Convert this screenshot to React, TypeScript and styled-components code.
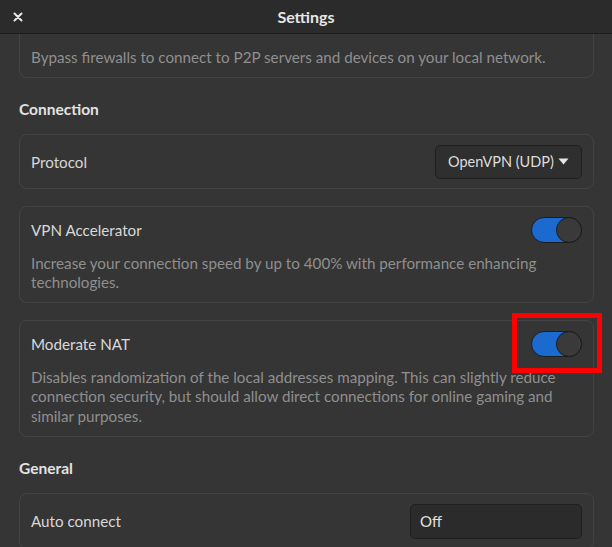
import { useLayoutEffect, useRef } from "react";
import styled, { createGlobalStyle } from "styled-components";

const GlobalStyle = createGlobalStyle`
  html, body {
    margin: 0;
    padding: 0;
    background: #353535;
  }
  body {
    font-family: Lato, "Noto Sans", sans-serif;
    color: #dadada;
  }
`;

const Window = styled.div`
  height: 100vh;
  display: flex;
  flex-direction: column;
  background: #353535;
`;

const HeaderBar = styled.header`
  height: 33px;
  flex: none;
  display: grid;
  grid-template-columns: 40px 1fr 40px;
  align-items: center;
  background: #2b2b2b;
  border-bottom: 1px solid #1c1c1c;
`;

const CloseButton = styled.button`
  width: 30px;
  height: 30px;
  margin-left: 3px;
  display: flex;
  align-items: center;
  justify-content: center;
  padding: 0;
  border: none;
  background: transparent;
  color: #e8e8e8;
`;

const Title = styled.h1`
  margin: 0;
  text-align: center;
  font-size: 16px;
  font-weight: 700;
  color: #e6e6e6;
`;

const Scroller = styled.main`
  flex: 1;
  overflow: hidden;
`;

const Content = styled.div`
  padding: 12px 18px 24px 19px;
  display: flex;
  flex-direction: column;
`;

const SectionTitle = styled.h2`
  margin: 21px 0 15px;
  font-size: 15.5px;
  line-height: 20px;
  font-weight: 700;
  color: #e2e2e2;
`;

const Card = styled.section<{ $gap?: boolean }>`
  border: 1px solid #444444;
  border-radius: 8px;
  padding: 10px 11px 9px;
  margin-top: ${(p) => (p.$gap ? "17px" : "0")};
  display: flex;
  flex-direction: column;
  gap: 11px;
`;

const Row = styled.div<{ $tall?: boolean }>`
  display: flex;
  align-items: ${(p) => (p.$tall ? "flex-start" : "center")};
  justify-content: space-between;
  min-height: ${(p) => (p.$tall ? "31px" : "26px")};
`;

const Label = styled.span`
  font-size: 15.2px;
  color: #d8d8d8;
`;

const Description = styled.p`
  margin: 0;
  font-size: 15.2px;
  line-height: 19.6px;
  color: #8f8f8f;
`;

const ToggleWrap = styled.div`
  position: relative;
  display: flex;
`;

const Track = styled.div<{ $on: boolean }>`
  width: 51px;
  height: 26px;
  box-sizing: border-box;
  border-radius: 13px;
  border: 1px solid #1d1d1d;
  background: ${(p) => (p.$on ? "#1b6acf" : "#2c2c2c")};
  display: flex;
  justify-content: ${(p) => (p.$on ? "flex-end" : "flex-start")};
`;

const Knob = styled.div`
  width: 26px;
  height: 26px;
  margin: -1px;
  box-sizing: border-box;
  border-radius: 50%;
  border: 1.5px solid #1a1a1a;
  background: #3a3a3a;
`;

const Highlight = styled.div`
  position: absolute;
  top: -18px;
  right: -20px;
  bottom: -16px;
  left: -19px;
  border: 5px solid #ff0000;
  pointer-events: none;
`;

const Dropdown = styled.button`
  height: 34px;
  width: 147px;
  box-sizing: border-box;
  padding: 0 12px;
  display: flex;
  align-items: center;
  justify-content: space-between;
  border: 1px solid #1f1f1f;
  border-radius: 5px;
  background: #2f2f2f;
  color: #dddddd;
  font-family: inherit;
  font-size: 14.5px;
`;

const Field = styled.div`
  height: 35px;
  width: 172px;
  box-sizing: border-box;
  padding: 0 9px;
  display: flex;
  align-items: center;
  border: 1px solid #1f1f1f;
  border-radius: 5px;
  background: #2b2b2b;
  color: #e2e2e2;
  font-size: 15px;
`;

function Toggle({ on, highlighted }: { on: boolean; highlighted?: boolean }) {
  return (
    <ToggleWrap>
      <Track $on={on}>
        <Knob />
      </Track>
      {highlighted && <Highlight />}
    </ToggleWrap>
  );
}

function App() {
  const scroller = useRef<HTMLElement>(null);

  // the window is shown scrolled a little, the first card is under the header
  useLayoutEffect(() => {
    if (scroller.current) scroller.current.scrollTop = 51;
  }, []);

  return (
    <Window>
      <GlobalStyle />
      <HeaderBar>
        <CloseButton aria-label="Close">
          <svg width="10" height="10" viewBox="0 0 10 10">
            <path
              d="M1.5 1.5 L8.5 8.5 M8.5 1.5 L1.5 8.5"
              stroke="currentColor"
              strokeWidth="2"
              strokeLinecap="round"
            />
          </svg>
        </CloseButton>
        <Title>Settings</Title>
        <span />
      </HeaderBar>
      <Scroller ref={scroller}>
        <Content>
          <Card>
            <Row $tall>
              <Label>Allow LAN connections</Label>
              <Toggle on={false} />
            </Row>
            <Description>
              Bypass firewalls to connect to P2P servers and devices on your local network.
            </Description>
          </Card>

          <SectionTitle>Connection</SectionTitle>
          <Card>
            <Row>
              <Label>Protocol</Label>
              <Dropdown>
                OpenVPN (UDP)
                <svg width="11" height="7" viewBox="0 0 11 7">
                  <path d="M0.5 0.5 H10.5 L5.5 6.5 Z" fill="#e6e6e6" />
                </svg>
              </Dropdown>
            </Row>
          </Card>
          <Card $gap>
            <Row>
              <Label>VPN Accelerator</Label>
              <Toggle on />
            </Row>
            <Description>
              Increase your connection speed by up to 400% with performance enhancing
              technologies.
            </Description>
          </Card>
          <Card $gap>
            <Row>
              <Label>Moderate NAT</Label>
              <Toggle on highlighted />
            </Row>
            <Description>
              Disables randomization of the local addresses mapping. This can slightly reduce
              connection security, but should allow direct connections for online gaming and
              similar purposes.
            </Description>
          </Card>

          <SectionTitle>General</SectionTitle>
          <Card>
            <Row>
              <Label>Auto connect</Label>
              <Field>Off</Field>
            </Row>
          </Card>
        </Content>
      </Scroller>
    </Window>
  );
}

export default App;
